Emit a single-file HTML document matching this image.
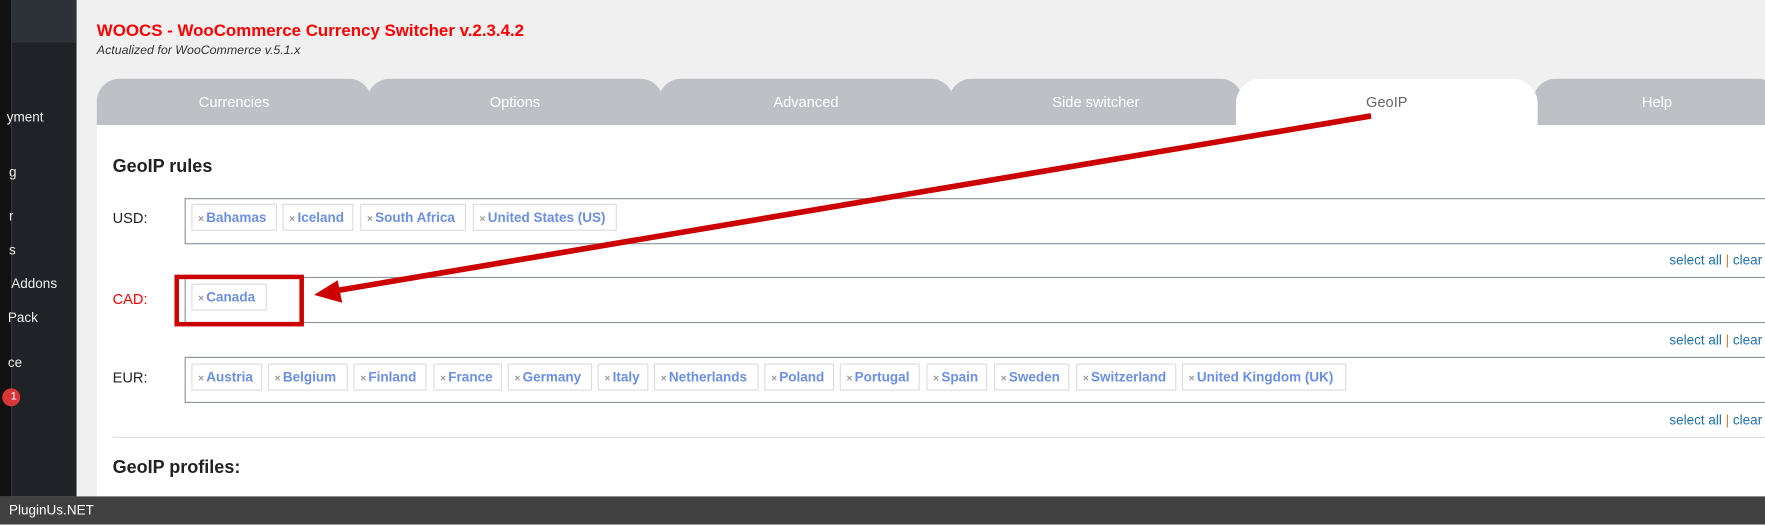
<!DOCTYPE html>
<html><head><meta charset="utf-8">
<style>
*{margin:0;padding:0;box-sizing:border-box}
html,body{width:1765px;height:525px;overflow:hidden;background:#f0f0f0;font-family:"Liberation Sans",Arial,sans-serif}
#w{position:absolute;left:0;top:0;width:1568px;height:466.4px;transform:scale(1.12564);transform-origin:0 0;overflow:hidden}
.a{position:absolute}
.tab{position:absolute;top:70px;height:41px;background:#bdc1c6;border-radius:20px 20px 0 0;color:#fff;font-size:13px;text-align:center;line-height:41px}
.tag{position:absolute;height:24px;border:1px solid #dcdcdc;background:#fff;color:#6b8fe6;font-weight:bold;font-size:12px;line-height:22px;padding-left:5px;white-space:nowrap}
.tag b{color:#999;font-size:9px;margin-right:2px;font-weight:bold}
.box{position:absolute;left:164px;width:1420px;height:41px;border:1px solid #8c949c;background:#fff}
.lbl{position:absolute;left:100px;font-size:13px;color:#222}
.sel{position:absolute;left:1483px;font-size:12px;color:#2271b1}
.sel span{color:#c57b3a}
</style></head><body><div id="w">
<div class="a" style="left:0;top:0;width:10px;height:441px;background:#111"></div>
<div class="a" style="left:10px;top:0;width:58px;height:441px;background:#1f2327"></div>
<div class="a" style="left:10px;top:0;width:58px;height:38px;background:#2c3238"></div>
<div class="a" style="left:10px;top:0;width:58px;height:441px;color:#eee;font-size:12px">
<div class="a" style="left:-4px;top:97px">yment</div>
<div class="a" style="left:-2px;top:146px">g</div>
<div class="a" style="left:-2px;top:185px">r</div>
<div class="a" style="left:-2px;top:215px">s</div>
<div class="a" style="left:0;top:245px">Addons</div>
<div class="a" style="left:-3px;top:275px">Pack</div>
<div class="a" style="left:-3px;top:315px">ce</div>
<div class="a" style="left:-8px;top:345px;width:16px;height:16px;border-radius:8px;background:#d63638;color:#fff;font-size:10px;text-align:right;padding-right:3px;line-height:16px">1</div>
</div>
<div class="a" style="left:86px;top:19px;color:#f00;font-weight:bold;font-size:15px">WOOCS - WooCommerce Currency Switcher v.2.3.4.2</div>
<div class="a" style="left:86px;top:39px;color:#333;font-style:italic;font-size:11px">Actualized for WooCommerce v.5.1.x</div>
<div class="a" style="left:86px;top:111px;width:1482px;height:330px;background:#fff"></div>
<div class="tab" style="left:86px;width:244px">Currencies</div>
<div class="tab" style="left:326px;width:263px">Options</div>
<div class="tab" style="left:585px;width:262px">Advanced</div>
<div class="tab" style="left:843px;width:261px">Side switcher</div>
<div class="tab" style="left:1362px;width:220px">Help</div>
<div class="tab" style="left:1098px;width:268px;background:#fff;color:#666;top:70px;height:42px;border-radius:22px 22px 0 0">GeoIP</div>
<div class="a" style="left:100px;top:140px;font-weight:bold;font-size:16px;color:#222">GeoIP rules</div>
<div class="lbl" style="top:186px">USD:</div>
<div class="box" style="top:176px"></div>
<div class="tag" style="left:170px;top:181px;width:76px"><b>×</b>Bahamas</div>
<div class="tag" style="left:251px;top:181px;width:63px"><b>×</b>Iceland</div>
<div class="tag" style="left:320px;top:181px;width:94px"><b>×</b>South Africa</div>
<div class="tag" style="left:420px;top:181px;width:128px"><b>×</b>United States (US)</div>
<div class="sel" style="top:224px">select all <span>|</span> clear</div>
<div class="lbl" style="top:258px;color:#f00">CAD:</div>
<div class="box" style="top:246px"></div>
<div class="tag" style="left:170px;top:252px;width:67px"><b>×</b>Canada</div>
<div class="a" style="left:155px;top:244px;width:115px;height:46px;border:4px solid #cc0000"></div>
<div class="sel" style="top:295px">select all <span>|</span> clear</div>
<div class="lbl" style="top:328px">EUR:</div>
<div class="box" style="top:317px"></div>
<div class="tag" style="left:170px;top:323px;width:63px"><b>×</b>Austria</div>
<div class="tag" style="left:238px;top:323px;width:71px"><b>×</b>Belgium</div>
<div class="tag" style="left:314px;top:323px;width:65px"><b>×</b>Finland</div>
<div class="tag" style="left:385px;top:323px;width:61px"><b>×</b>France</div>
<div class="tag" style="left:451px;top:323px;width:75px"><b>×</b>Germany</div>
<div class="tag" style="left:531px;top:323px;width:45px"><b>×</b>Italy</div>
<div class="tag" style="left:581px;top:323px;width:93px"><b>×</b>Netherlands</div>
<div class="tag" style="left:679px;top:323px;width:62px"><b>×</b>Poland</div>
<div class="tag" style="left:746px;top:323px;width:71px"><b>×</b>Portugal</div>
<div class="tag" style="left:823px;top:323px;width:54px"><b>×</b>Spain</div>
<div class="tag" style="left:883px;top:323px;width:67px"><b>×</b>Sweden</div>
<div class="tag" style="left:956px;top:323px;width:89px"><b>×</b>Switzerland</div>
<div class="tag" style="left:1050px;top:323px;width:146px"><b>×</b>United Kingdom (UK)</div>
<div class="sel" style="top:366px">select all <span>|</span> clear</div>
<div class="a" style="left:100px;top:388px;width:1480px;height:1px;background:#ddd"></div>
<div class="a" style="left:100px;top:407px;font-weight:bold;font-size:16px;color:#222">GeoIP profiles:</div>
<svg class="a" style="left:0;top:0" width="1568" height="466">
<line x1="1218" y1="103" x2="294" y2="259" stroke="#cc0000" stroke-width="5"/>
<polygon points="279,262 300,249 304,269" fill="#cc0000"/>
</svg>
<div class="a" style="left:0;top:441px;width:1568px;height:26px;background:#404040;color:#fff;font-size:12px;line-height:25px;padding-left:8px">PluginUs.NET</div>
</div></body></html>
